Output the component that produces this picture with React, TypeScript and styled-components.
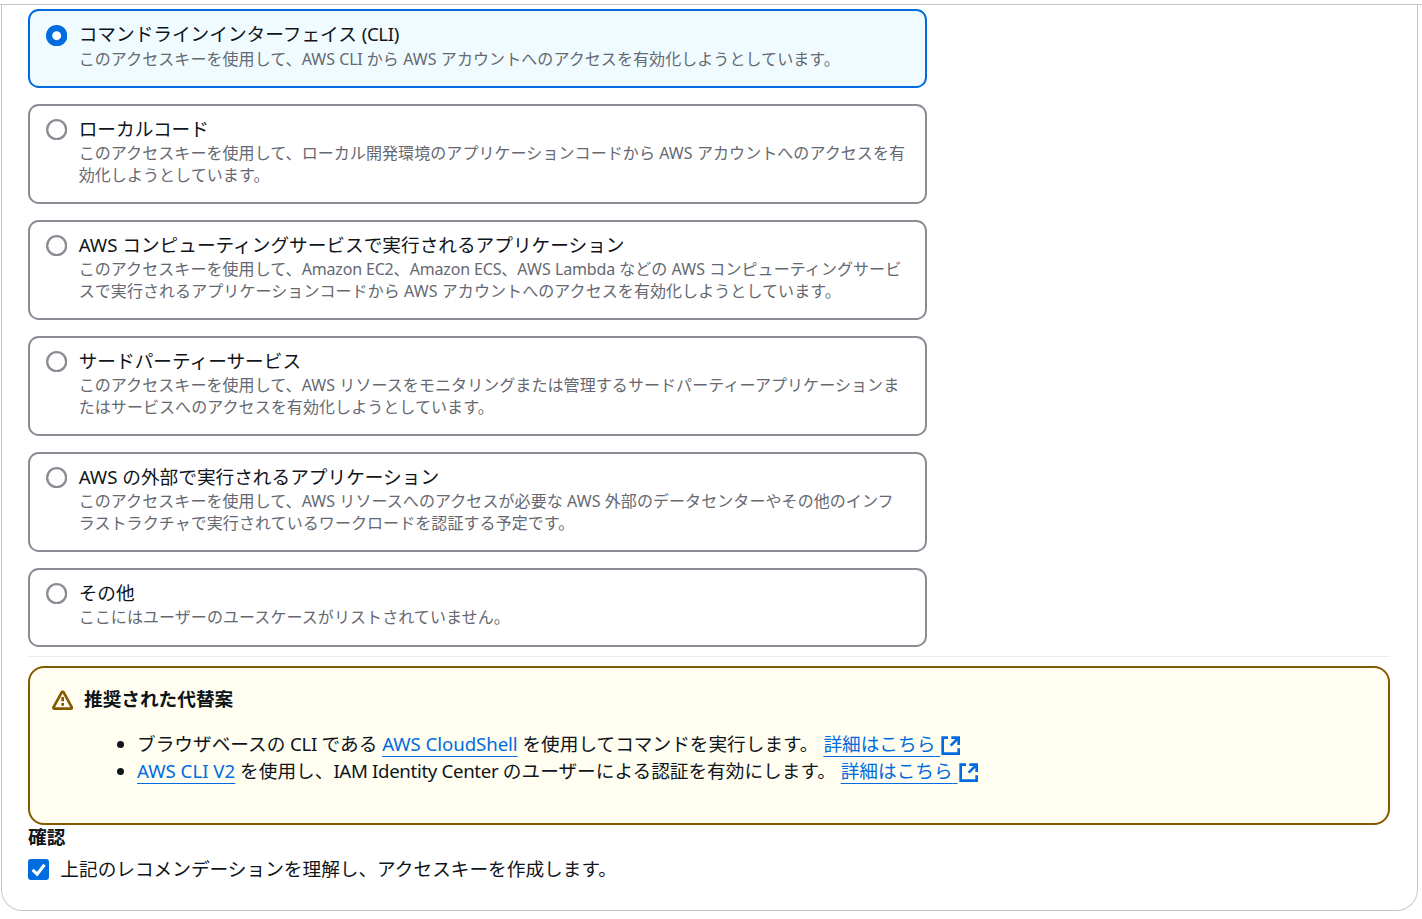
import React from 'react';
import styled, { createGlobalStyle } from 'styled-components';

const color = {
  text: '#0f141a',
  secondary: '#656871',
  line: '#c6c6cd',
  control: '#8c8c94',
  blue: '#006ce0',
  selected: '#f0fbff',
  warning: '#855900',
  warningBg: '#fffef0',
  divider: '#ebebf0',
};

const GlobalStyle = createGlobalStyle`
  *, *::before, *::after { box-sizing: border-box; }
  body {
    margin: 0;
    background: #fff;
    color: ${color.text};
    font-family: "Noto Sans", "Noto Sans CJK JP", sans-serif;
    font-size: 18.667px;
    line-height: 26.667px;
  }
`;

const Page = styled.main`
  height: 919px;
  overflow: hidden;
  padding: 4px 4px 8px 1px;
`;

const TopLine = styled.div`
  height: 1px;
  margin: 0 -4px 0 -1px;
  background: ${color.line};
`;

const Panel = styled.section`
  height: 906px;
  padding: 4.33px 27px 0 26px;
  border: 1px solid ${color.line};
  border-top: 0;
  border-radius: 0 0 21.33px 21.33px;
`;

const Tiles = styled.div`
  display: flex;
  flex-direction: column;
  gap: 16px;
  width: 899px;
`;

const TileBox = styled.label<{ $selected?: boolean }>`
  display: flex;
  gap: 11.33px;
  padding: 9.67px 16px 17px;
  border: 2px solid ${(p) => (p.$selected ? color.blue : color.control)};
  border-radius: 10.67px;
  background: ${(p) => (p.$selected ? color.selected : '#fff')};

  &:last-child {
    padding-bottom: 17.6px;
  }
`;

const RadioSvg = styled.svg<{ $selected?: boolean }>`
  flex: none;
  margin-top: ${(p) => (p.$selected ? '4px' : '3.33px')};
`;

const TileTitle = styled.div`
  height: 27.667px;
  white-space: nowrap;
`;

const TileDescription = styled.div`
  margin-bottom: -1px;
  color: ${color.secondary};
  font-size: 16px;
  line-height: 21.333px;
  letter-spacing: 0.075px;
  white-space: pre;
`;

const Latin = styled.span<{ $tracking: number }>`
  letter-spacing: ${(p) => p.$tracking}em;
`;

const Divider = styled.div`
  height: 1px;
  margin: 9px 0 9px;
  background: ${color.divider};
`;

const Alert = styled.section`
  height: 159px;
  padding: 18px 22px;
  border: 2px solid ${color.warning};
  border-radius: 16px;
  background: ${color.warningBg};
`;

const AlertHeader = styled.h2`
  display: flex;
  align-items: center;
  gap: 10.67px;
  margin: 0;
  font-size: inherit;
  font-weight: 700;

  svg {
    margin-top: 2px;
  }
`;

const Suggestions = styled.ul`
  margin: 18.2px 0 0;
  padding-left: 85px;
`;

const Suggestion = styled.li`
  height: 27px;
  white-space: nowrap;
`;

const Link = styled.a`
  color: ${color.blue};
  text-decoration: underline;
  text-decoration-thickness: 1px;
  text-underline-offset: 5px;
`;

const ConfirmTitle = styled.h3`
  margin: -1px 0 0;
  font-size: inherit;
  font-weight: 700;
`;

const CheckRow = styled.label`
  display: flex;
  gap: 11px;
  margin-top: 5.2px;
`;

const Checkbox = styled.span`
  display: flex;
  flex: none;
  width: 21.33px;
  height: 21.33px;
  margin-top: 3px;
  border-radius: 3px;
  background: ${color.blue};
`;

const ExternalSvg = styled.svg`
  vertical-align: -5px;
`;

function Radio({ selected }: { selected?: boolean }) {
  return (
    <RadioSvg $selected={selected} width="21.33" height="21.33" viewBox="0 0 20 20">
      {selected ? (
        <>
          <circle cx="10" cy="10" r="10" fill={color.blue} />
          <circle cx="10" cy="10" r="4.2" fill="#fff" />
        </>
      ) : (
        <circle cx="10" cy="10" r="8.9" fill="#fff" stroke={color.control} strokeWidth="2.2" />
      )}
    </RadioSvg>
  );
}

function WarningIcon() {
  return (
    <svg width="21.33" height="21.33" viewBox="0 0 16 16" fill="none" stroke={color.warning} strokeWidth="2">
      <path d="M8 5.3v3.2M8 9.8v2" />
      <path strokeLinejoin="round" d="M8.75 1.75a.85.85 0 0 0-1.5 0L1.12 13c-.2.5.1 1 .7 1h12.36c.6 0 .9-.5.7-1Z" />
    </svg>
  );
}

function ExternalIcon() {
  return (
    <ExternalSvg width="21.33" height="21.33" viewBox="0 0 16 16" fill="none" stroke={color.blue} strokeWidth="2">
      <path d="M8.5 2H14v5.5M8 8l6-6" />
      <path d="M14 10v4H2V2h4" />
    </ExternalSvg>
  );
}

const tracking: Record<string, number> = {
  '(CLI)': -0.02,
  CLI: -0.015,
  'Amazon EC2': -0.01,
  'Amazon ECS': -0.01,
  Lambda: -0.012,
};

function Tracked({ text }: { text: string }) {
  return (
    <>
      {text
        .split(/(\(CLI\)|CLI|Amazon EC2|Amazon ECS|Lambda)/)
        .map((part, i) =>
          part in tracking ? (
            <Latin key={i} $tracking={tracking[part]}>
              {part}
            </Latin>
          ) : (
            part
          ),
        )}
    </>
  );
}

const options = [
  {
    title: 'コマンドラインインターフェイス (CLI)',
    lines: ['このアクセスキーを使用して、AWS CLI から AWS アカウントへのアクセスを有効化しようとしています。'],
    selected: true,
  },
  {
    title: 'ローカルコード',
    lines: [
      'このアクセスキーを使用して、ローカル開発環境のアプリケーションコードから AWS アカウントへのアクセスを有',
      '効化しようとしています。',
    ],
  },
  {
    title: 'AWS コンピューティングサービスで実行されるアプリケーション',
    lines: [
      'このアクセスキーを使用して、Amazon EC2、Amazon ECS、AWS Lambda などの AWS コンピューティングサービ',
      'スで実行されるアプリケーションコードから AWS アカウントへのアクセスを有効化しようとしています。',
    ],
  },
  {
    title: 'サードパーティーサービス',
    lines: [
      'このアクセスキーを使用して、AWS リソースをモニタリングまたは管理するサードパーティーアプリケーションま',
      'たはサービスへのアクセスを有効化しようとしています。',
    ],
  },
  {
    title: 'AWS の外部で実行されるアプリケーション',
    lines: [
      'このアクセスキーを使用して、AWS リソースへのアクセスが必要な AWS 外部のデータセンターやその他のインフ',
      'ラストラクチャで実行されているワークロードを認証する予定です。',
    ],
  },
  {
    title: 'その他',
    lines: ['ここにはユーザーのユースケースがリストされていません。'],
  },
];

export default function App() {
  return (
    <Page lang="ja">
      <GlobalStyle />
      <TopLine />
      <Panel>
        <Tiles>
          {options.map((option) => (
            <TileBox key={option.title} $selected={option.selected}>
              <Radio selected={option.selected} />
              <div>
                <TileTitle>
                  <Tracked text={option.title} />
                </TileTitle>
                <TileDescription>
                  {option.lines.map((line) => (
                    <div key={line}>
                      <Tracked text={line} />
                    </div>
                  ))}
                </TileDescription>
              </div>
            </TileBox>
          ))}
        </Tiles>
        <Divider />
        <Alert>
          <AlertHeader>
            <WarningIcon />
            推奨された代替案
          </AlertHeader>
          <Suggestions>
            <Suggestion>
              ブラウザベースの<Latin $tracking={-0.015}> CLI </Latin>である{' '}
              <Link>
                <Latin $tracking={-0.004}>AWS CloudShell</Latin>
              </Link>{' '}
              を使用してコマンドを実行します。 <Link>詳細はこちら{' '}</Link>
              <ExternalIcon />
            </Suggestion>
            <Suggestion>
              <Link>AWS CLI V2</Link> を使用し、<Latin $tracking={-0.018}>IAM Identity Center </Latin>
              のユーザーによる認証を有効にします。 <Link>詳細はこちら{' '}</Link>
              <ExternalIcon />
            </Suggestion>
          </Suggestions>
        </Alert>
        <ConfirmTitle>確認</ConfirmTitle>
        <CheckRow>
          <Checkbox>
            <svg width="21.33" height="21.33" viewBox="0 0 14 14" fill="none" stroke="#fff" strokeWidth="2">
              <path d="M3 7.2 6 10l4.8-6.2" />
            </svg>
          </Checkbox>
          上記のレコメンデーションを理解し、アクセスキーを作成します。
        </CheckRow>
      </Panel>
    </Page>
  );
}
